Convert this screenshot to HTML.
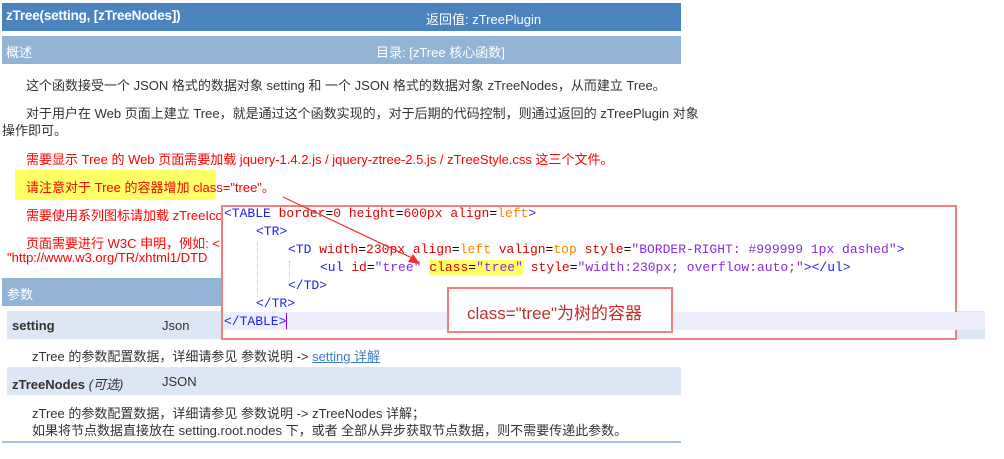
<!DOCTYPE html>
<html><head><meta charset="utf-8"><style>
body{margin:0;width:1004px;height:459px;background:#fff;position:relative;overflow:hidden;font-family:"Liberation Sans","Noto Sans CJK SC",sans-serif;font-size:13px;color:#333}
.a{position:absolute;white-space:nowrap}
.code{font-family:"Liberation Mono","DejaVu Sans Mono",monospace;font-size:13px;position:absolute;white-space:nowrap}
.b{color:#2020ff}.r{color:#e00000}.o{color:#ff8000}.p{color:#8a2be2}.k{color:#000}
</style></head><body>
<div class="a" style="left:2px;top:3px;width:679px;height:28px;background:#4a83bd"></div>
<div class="a" style="left:6px;top:8px;color:#fff;font-weight:bold;font-size:13.5px;letter-spacing:-0.2px">zTree(setting, [zTreeNodes])</div>
<div class="a" style="left:426px;top:9px;color:#fff;font-size:13px">返回值: zTreePlugin</div>
<div class="a" style="left:2px;top:36px;width:679px;height:28px;background:#94b4d6"></div>
<div class="a" style="left:6px;top:42px;color:#fff">概述</div>
<div class="a" style="left:376px;top:42px;color:#fff">目录: [zTree 核心函数]</div>
<div class="a" style="left:26px;top:75px">这个函数接受一个 JSON 格式的数据对象 setting 和 一个 JSON 格式的数据对象 zTreeNodes，从而建立 Tree。</div>
<div class="a" style="left:26px;top:103px">对于用户在 Web 页面上建立 Tree，就是通过这个函数实现的，对于后期的代码控制，则通过返回的 zTreePlugin 对象</div>
<div class="a" style="left:2px;top:120px">操作即可。</div>
<div class="a" style="left:26px;top:149px;color:#f00">需要显示 Tree 的 Web 页面需要加载 jquery-1.4.2.js / jquery-ztree-2.5.js / zTreeStyle.css 这三个文件。</div>
<div class="a" style="left:15px;top:170px;width:201px;height:30px;background:#ffff66"></div>
<div class="a" style="left:26px;top:177px;color:#f00">请注意对于 Tree 的容器增加 class="tree"。</div>
<div class="a" style="left:26px;top:205px;color:#f00">需要使用系列图标请加载 zTreeIcon</div>
<div class="a" style="left:26px;top:233px;color:#f00">页面需要进行 W3C 申明，例如: &lt;!</div>
<div class="a" style="left:7px;top:250px;color:#f00">"http://www.w3.org/TR/xhtml1/DTD</div>
<div class="a" style="left:2px;top:278px;width:224px;height:28px;background:#94b4d6"></div>
<div class="a" style="left:7px;top:284px;color:#fff">参数</div>
<div class="a" style="left:7px;top:311px;width:978px;height:28px;background:#dde6f5"></div>
<div class="a" style="left:12px;top:318px;font-weight:bold">setting</div>
<div class="a" style="left:162px;top:318px">Json</div>
<div class="a" style="left:32px;top:346px">zTree 的参数配置数据，详细请参见 参数说明 -&gt; <span style="color:#3b7cc4;text-decoration:underline">setting 详解</span></div>
<div class="a" style="left:7px;top:367px;width:674px;height:28px;background:#dde6f5"></div>
<div class="a" style="left:12px;top:374px"><b>zTreeNodes</b> <i>(可选)</i></div>
<div class="a" style="left:162px;top:374px">JSON</div>
<div class="a" style="left:32px;top:403px">zTree 的参数配置数据，详细请参见 参数说明 -&gt; zTreeNodes 详解；</div>
<div class="a" style="left:32px;top:420px">如果将节点数据直接放在 setting.root.nodes 下，或者 全部从异步获取节点数据，则不需要传递此参数。</div>
<div class="a" style="left:2px;top:441px;width:679px;height:2px;background:#a8c2e0"></div>

<div class="a" style="left:221px;top:205px;width:732px;height:131px;border:2px solid #f08080;background:#fff"></div>
<div class="a" style="left:223px;top:312px;width:762px;height:18px;background:#ededfc"></div>
<div class="a" style="left:257px;top:243px;border-left:1px dotted #bbb;height:54px"></div>
<div class="a" style="left:289px;top:261px;border-left:1px dotted #bbb;height:18px"></div>
<div class="code" style="left:224px;top:206px"><span class="b">&lt;TABLE</span> <span class="r">border</span><span class="k">=</span><span class="r">0</span> <span class="r">height</span><span class="k">=</span><span class="r">600px</span> <span class="r">align</span><span class="k">=</span><span class="o">left</span><span class="b">&gt;</span></div>
<div class="code b" style="left:256px;top:224px">&lt;TR&gt;</div>
<div class="code" style="left:288px;top:242px"><span class="b">&lt;TD</span> <span class="r">width</span><span class="k">=</span><span class="r">230px</span> <span class="r">align</span><span class="k">=</span><span class="o">left</span> <span class="r">valign</span><span class="k">=</span><span class="o">top</span> <span class="r">style</span><span class="k">=</span><span class="p">"BORDER-RIGHT: #999999 1px dashed"</span><span class="b">&gt;</span></div>
<div class="code" style="left:320px;top:260px"><span class="b">&lt;ul</span> <span class="r">id</span><span class="k">=</span><span class="p">"tree"</span> <span style="background:#ffff66"><span class="r">class</span><span class="k">=</span><span class="p">"tree"</span></span> <span class="r">style</span><span class="k">=</span><span class="p">"width:230px; overflow:auto;"</span><span class="b">&gt;&lt;/ul&gt;</span></div>
<div class="code b" style="left:288px;top:278px">&lt;/TD&gt;</div>
<div class="code b" style="left:256px;top:296px">&lt;/TR&gt;</div>
<div class="code b" style="left:224px;top:314px">&lt;/TABLE&gt;</div>
<div class="a" style="left:286px;top:313px;width:1px;height:16px;background:#8000ff"></div>
<div class="a" style="left:447px;top:287px;width:222px;height:42px;border:2px solid #f08080;background:#fff"></div>
<div class="a" style="left:467px;top:299px;color:#c0302a;font-size:17px">class="tree"为树的容器</div>
<svg class="a" style="left:0;top:0" width="1004" height="459"><line x1="283" y1="197" x2="412" y2="258" stroke="#f03030" stroke-width="1.2"/><polygon points="420,264 408,262 413,254" fill="#f03030"/></svg>
</body></html>
